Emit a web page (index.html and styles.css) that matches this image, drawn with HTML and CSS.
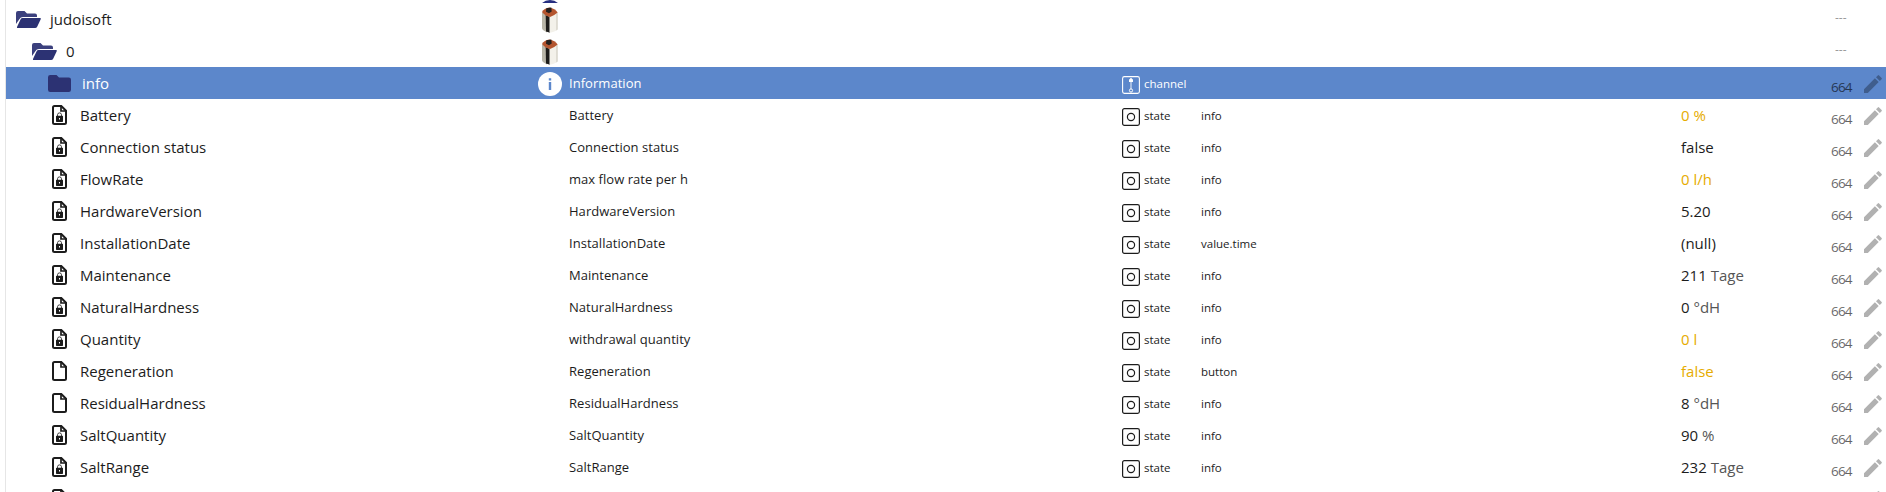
FILE: index.html
```html
<!DOCTYPE html>
<html lang="en">

<head>
    <meta charset="utf-8">
    <title>Objects</title>
    <link rel="stylesheet" href="styles.css">
</head>

<body>
    <!-- Shared icons -->
    <svg class="sprite">
        <symbol id="folder-open" viewBox="0 0 25 17">
            <path d="M0 13V2Q0 0 2 0H8.500L11 2.500H19Q21 2.500 21 4.500V6H7Q4.500 6 3.500 8Z" opacity=".93" />
            <path d="M6.500 7H24Q25.300 7 24.700 8.300L21.300 15.500Q20.600 17 19 17H1.800Q.5 17 1.100 15.700L4.500 8.400Q5.200 7 6.500 7Z" />
        </symbol>
        <symbol id="folder" viewBox="0 0 23 17">
            <path d="M2.200 0H8.500L11 2.500H20.800Q23 2.500 23 4.700V14.800Q23 17 20.800 17H2.200Q0 17 0 14.800V2.200Q0 0 2.200 0Z" />
        </symbol>
        <symbol id="file" viewBox="0 0 15 20">
            <path d="M2.500 1H9.300L14 5.700V17.500Q14 19 12.500 19H2.500Q1 19 1 17.500V2.500Q1 1 2.500 1Z" fill="none" stroke="currentColor" stroke-width="2" />
            <path d="M9 1V6H14" fill="none" stroke="currentColor" stroke-width="1.700" />
        </symbol>
        <symbol id="file-lock" viewBox="0 0 15 20">
            <use href="#file" width="15" height="20" />
            <path d="M5.500 11V9.800Q5.500 7.900 7.500 7.900T9.500 9.800V11" fill="none" stroke="currentColor" stroke-width=".8" />
            <path fill-rule="evenodd" d="M4.700 10.700H10.300Q11 10.700 11 11.400V16.300Q11 17 10.300 17H4.700Q4 17 4 16.300V11.400Q4 10.700 4.700 10.700ZM7 13V14.600H8V13Z" />
        </symbol>
        <symbol id="device" viewBox="0 0 16 26">
            <path d="M0 5L5 9V25.500L1 23Q0 22 0 21Z" fill="#b9b6a8" />
            <path d="M3.700 8L8 10V25.800L4 24.500Z" fill="#1d1c1a" />
            <path d="M7.500 9L15.500 6V22.500Q13 25 7.500 25.700Z" fill="#f3f1ea" />
            <path d="M14.500 6.500L15.500 6V22.500L14.500 23.500Z" fill="#c9c6ba" />
            <path d="M0 5Q2 1 7.500 .5Q13 1.500 15.700 5.500Q12 8.800 8 10Q3 9 0 5Z" fill="#b4552f" />
            <path d="M4.300 1.200L9.300 .5L9.700 4.500L7 6.200L4 4.700Z" fill="#25201e" />
        </symbol>
        <symbol id="info" viewBox="0 0 24 24">
            <circle cx="12" cy="12" r="12" fill="#fff" />
            <path d="M10.800 6.200H13.200V8.500H10.800ZM10.800 10H13.200V18H10.800Z" fill="#5c87cb" />
        </symbol>
        <symbol id="state" viewBox="0 0 18 18">
            <rect x=".6" y=".6" width="16.800" height="16.800" rx="1.800" fill="none" stroke="currentColor" stroke-width="1.200" />
            <circle cx="9" cy="9" r="3.600" fill="none" stroke="currentColor" stroke-width="1.200" />
        </symbol>
        <symbol id="channel" viewBox="0 0 18 18">
            <rect x=".6" y=".6" width="16.800" height="16.800" rx="1.800" fill="none" stroke="currentColor" stroke-width="1.100" />
            <path d="M8 2.300H10V3.300H11V6H7V3.300H8Z" />
            <path d="M9 6V13" stroke="currentColor" stroke-width=".9" />
            <circle cx="9" cy="14.500" r="1.600" fill="none" stroke="currentColor" stroke-width="1" />
        </symbol>
        <symbol id="pencil" viewBox="0 0 18 18">
            <path d="M0 14.200L10.900 3.300L14.700 7.100L3.800 18H0ZM12 2.200L13.800 .4Q14.400 -.2 15.100 .4L17.600 2.900Q18.200 3.500 17.600 4.200L15.800 6Z" />
        </symbol>
    </svg>

    <div class="list">
        <div class="row row-top">
            <div></div>
            <div class="thumb"><span class="dot"></span></div>
        </div>

        <div class="row">
            <div class="name level-0"><svg class="folder-open"><use href="#folder-open" /></svg>judoisoft</div>
            <div class="thumb"><svg class="device"><use href="#device" /></svg></div>
            <div class="desc"></div>
            <div class="type"></div>
            <div class="role"></div>
            <div class="value"></div>
            <div class="acl none">---</div>
        </div>
        <div class="row">
            <div class="name level-1"><svg class="folder-open"><use href="#folder-open" /></svg>0</div>
            <div class="thumb"><svg class="device"><use href="#device" /></svg></div>
            <div class="desc"></div>
            <div class="type"></div>
            <div class="role"></div>
            <div class="value"></div>
            <div class="acl none">---</div>
        </div>
        <div class="row selected">
            <div class="name level-2"><svg class="folder"><use href="#folder" /></svg>info</div>
            <div class="thumb"><svg class="info"><use href="#info" /></svg></div>
            <div class="desc">Information</div>
            <div class="type"><svg><use href="#channel" /></svg>channel</div>
            <div class="role"></div>
            <div class="value"></div>
            <div class="acl">664</div>
            <div class="edit"><svg><use href="#pencil" /></svg></div>
        </div>

        <div class="row">
            <div class="name"><svg class="file"><use href="#file-lock" /></svg>Battery</div>
            <div class="thumb"></div>
            <div class="desc">Battery</div>
            <div class="type"><svg><use href="#state" /></svg>state</div>
            <div class="role">info</div>
            <div class="value unack">0 %</div>
            <div class="acl">664</div>
            <div class="edit"><svg><use href="#pencil" /></svg></div>
        </div>
        <div class="row">
            <div class="name"><svg class="file"><use href="#file-lock" /></svg>Connection status</div>
            <div class="thumb"></div>
            <div class="desc">Connection status</div>
            <div class="type"><svg><use href="#state" /></svg>state</div>
            <div class="role">info</div>
            <div class="value">false</div>
            <div class="acl">664</div>
            <div class="edit"><svg><use href="#pencil" /></svg></div>
        </div>
        <div class="row">
            <div class="name"><svg class="file"><use href="#file-lock" /></svg>FlowRate</div>
            <div class="thumb"></div>
            <div class="desc">max flow rate per h</div>
            <div class="type"><svg><use href="#state" /></svg>state</div>
            <div class="role">info</div>
            <div class="value unack">0 l/h</div>
            <div class="acl">664</div>
            <div class="edit"><svg><use href="#pencil" /></svg></div>
        </div>
        <div class="row">
            <div class="name"><svg class="file"><use href="#file-lock" /></svg>HardwareVersion</div>
            <div class="thumb"></div>
            <div class="desc">HardwareVersion</div>
            <div class="type"><svg><use href="#state" /></svg>state</div>
            <div class="role">info</div>
            <div class="value">5.20</div>
            <div class="acl">664</div>
            <div class="edit"><svg><use href="#pencil" /></svg></div>
        </div>
        <div class="row">
            <div class="name"><svg class="file"><use href="#file-lock" /></svg>InstallationDate</div>
            <div class="thumb"></div>
            <div class="desc">InstallationDate</div>
            <div class="type"><svg><use href="#state" /></svg>state</div>
            <div class="role">value.time</div>
            <div class="value">(null)</div>
            <div class="acl">664</div>
            <div class="edit"><svg><use href="#pencil" /></svg></div>
        </div>
        <div class="row">
            <div class="name"><svg class="file"><use href="#file-lock" /></svg>Maintenance</div>
            <div class="thumb"></div>
            <div class="desc">Maintenance</div>
            <div class="type"><svg><use href="#state" /></svg>state</div>
            <div class="role">info</div>
            <div class="value">211 <span class="unit">Tage</span></div>
            <div class="acl">664</div>
            <div class="edit"><svg><use href="#pencil" /></svg></div>
        </div>
        <div class="row">
            <div class="name"><svg class="file"><use href="#file-lock" /></svg>NaturalHardness</div>
            <div class="thumb"></div>
            <div class="desc">NaturalHardness</div>
            <div class="type"><svg><use href="#state" /></svg>state</div>
            <div class="role">info</div>
            <div class="value">0 <span class="unit">°dH</span></div>
            <div class="acl">664</div>
            <div class="edit"><svg><use href="#pencil" /></svg></div>
        </div>
        <div class="row">
            <div class="name"><svg class="file"><use href="#file-lock" /></svg>Quantity</div>
            <div class="thumb"></div>
            <div class="desc">withdrawal quantity</div>
            <div class="type"><svg><use href="#state" /></svg>state</div>
            <div class="role">info</div>
            <div class="value unack">0 l</div>
            <div class="acl">664</div>
            <div class="edit"><svg><use href="#pencil" /></svg></div>
        </div>
        <div class="row">
            <div class="name"><svg class="file"><use href="#file" /></svg>Regeneration</div>
            <div class="thumb"></div>
            <div class="desc">Regeneration</div>
            <div class="type"><svg><use href="#state" /></svg>state</div>
            <div class="role">button</div>
            <div class="value unack">false</div>
            <div class="acl">664</div>
            <div class="edit"><svg><use href="#pencil" /></svg></div>
        </div>
        <div class="row">
            <div class="name"><svg class="file"><use href="#file" /></svg>ResidualHardness</div>
            <div class="thumb"></div>
            <div class="desc">ResidualHardness</div>
            <div class="type"><svg><use href="#state" /></svg>state</div>
            <div class="role">info</div>
            <div class="value">8 <span class="unit">°dH</span></div>
            <div class="acl">664</div>
            <div class="edit"><svg><use href="#pencil" /></svg></div>
        </div>
        <div class="row">
            <div class="name"><svg class="file"><use href="#file-lock" /></svg>SaltQuantity</div>
            <div class="thumb"></div>
            <div class="desc">SaltQuantity</div>
            <div class="type"><svg><use href="#state" /></svg>state</div>
            <div class="role">info</div>
            <div class="value">90 <span class="unit">%</span></div>
            <div class="acl">664</div>
            <div class="edit"><svg><use href="#pencil" /></svg></div>
        </div>
        <div class="row">
            <div class="name"><svg class="file"><use href="#file-lock" /></svg>SaltRange</div>
            <div class="thumb"></div>
            <div class="desc">SaltRange</div>
            <div class="type"><svg><use href="#state" /></svg>state</div>
            <div class="role">info</div>
            <div class="value">232 <span class="unit">Tage</span></div>
            <div class="acl">664</div>
            <div class="edit"><svg><use href="#pencil" /></svg></div>
        </div>
        <div class="row">
            <div class="name"><svg class="file"><use href="#file-lock" /></svg></div>
            <div class="thumb"></div>
            <div class="desc"></div>
            <div class="type"></div>
            <div class="role"></div>
            <div class="value"></div>
            <div class="acl"></div>
            <div class="edit"><svg><use href="#pencil" /></svg></div>
        </div>
    </div>
</body>

</html>
```
FILE: styles.css
```css
/* General Styling */
body {
    margin: 0;
    background: #fff;
    color: #1c1c1c;
    font-family: "Open Sans", "Noto Sans", sans-serif;
    font-size: 15px;
    overflow: hidden;
}

svg {
    display: block;
    flex: none;
    fill: currentColor;
}

.sprite {
    display: none;
}

/* Object list */
.list {
    box-sizing: border-box;
    height: 492px;
    margin-left: 5px;
    border-left: 1px solid #e6e6e6;
    overflow: hidden;
}

.row {
    display: grid;
    grid-template-columns: 532px 31px 553px 79px 480px 150px 33px 22px;
    align-items: center;
    height: 32px;
    white-space: nowrap;
}

/* Remainder of the row scrolled out at the top */
.row-top {
    height: 3px;
    align-items: end;
    overflow: hidden;
}

.dot {
    display: block;
    width: 24px;
    height: 24px;
    margin-bottom: 1px;
    border-radius: 50%;
    background: #262e80;
}

.selected {
    background: #5c87cb;
    color: #fff;
}

/* Name column */
.name {
    display: flex;
    align-items: center;
    height: 32px;
    padding-left: 46px;
}

.level-0 {
    padding-left: 10px;
}

.level-1 {
    padding-left: 26px;
}

.level-2 {
    padding-left: 42px;
}

.folder-open {
    width: 25px;
    height: 17px;
    margin-right: 9px;
    color: #2c3273;
}

.folder {
    width: 23px;
    height: 17px;
    margin-right: 11px;
    color: #2c3273;
}

.file {
    width: 15px;
    height: 20px;
    margin-right: 13px;
}

/* Icon column */
.thumb {
    display: flex;
    width: 24px;
    justify-content: center;
}

.device {
    width: 16px;
    height: 26px;
    margin-top: 1px;
}

.info {
    width: 24px;
    height: 24px;
    margin-top: 2px;
}

.desc {
    font-size: 13px;
    letter-spacing: 0.04px;
}

.type {
    display: flex;
    align-items: center;
    gap: 4px;
    font-size: 11.500px;
}

.type svg {
    width: 18px;
    height: 18px;
    margin-top: 4px;
}

.role {
    font-size: 11.500px;
}

.unack {
    color: #e6ac00;
}

.unit {
    color: #555;
}

/* Rights and edit button */
.acl {
    padding-top: 7px;
    font-size: 13.500px;
    letter-spacing: -0.8px;
    color: #000;
    opacity: 0.6;
}

.none {
    padding: 0 0 3px 4px;
    font-size: 12px;
    letter-spacing: 0;
    opacity: 0.4;
}

.edit {
    color: #000;
    opacity: 0.3;
}

.edit svg {
    width: 18px;
    height: 18px;
    margin-top: 2px;
}
```
